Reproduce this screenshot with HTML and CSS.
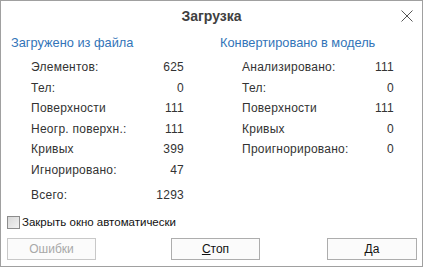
FILE: index.html
```html
<!DOCTYPE html>
<html lang="ru">
<head>
    <meta charset="UTF-8">
    <title>Загрузка</title>
    <link rel="stylesheet" href="styles.css">
</head>
<body>
    <div class="dialog">
        <div class="titlebar">
            <span class="title">Загрузка</span>
            <svg class="close" width="12" height="12" viewBox="0 0 12 12">
                <line x1="0.5" y1="0.5" x2="11.5" y2="11.5" />
                <line x1="11.5" y1="0.5" x2="0.5" y2="11.5" />
            </svg>
        </div>

        <div class="cols">
            <div class="col col-left">
                <div class="head">Загружено из файла</div>
                <div class="rows">
                    <div class="row"><span>Элементов:</span><span>625</span></div>
                    <div class="row"><span>Тел:</span><span>0</span></div>
                    <div class="row"><span>Поверхности</span><span>111</span></div>
                    <div class="row"><span>Неогр. поверхн.:</span><span>111</span></div>
                    <div class="row"><span>Кривых</span><span>399</span></div>
                    <div class="row"><span>Игнорировано:</span><span>47</span></div>
                    <div class="row total"><span>Всего:</span><span>1293</span></div>
                </div>
            </div>
            <div class="col col-right">
                <div class="head">Конвертировано в модель</div>
                <div class="rows">
                    <div class="row"><span>Анализировано:</span><span>111</span></div>
                    <div class="row"><span>Тел:</span><span>0</span></div>
                    <div class="row"><span>Поверхности</span><span>111</span></div>
                    <div class="row"><span>Кривых</span><span>0</span></div>
                    <div class="row"><span>Проигнорировано:</span><span>0</span></div>
                </div>
            </div>
        </div>

        <div class="footer">
            <label class="check"><span class="box"></span>Закрыть окно автоматически</label>
            <div class="buttons">
                <button class="btn btn-errors" disabled>Ошибки</button>
                <button class="btn btn-stop"><u>С</u>топ</button>
                <button class="btn btn-ok">Да</button>
            </div>
        </div>
    </div>
</body>
</html>
```

FILE: styles.css
```css
body { margin: 0; background: #fff; font-family: "Liberation Sans", Arial, sans-serif; font-size: 12px; color: #333; }

.dialog {
    width: 423px;
    height: 267px;
    box-sizing: border-box;
    border: 1px solid #a0a0a0;
    display: flex;
    flex-direction: column;
    position: relative;
}

.titlebar {
    height: 30px;
    line-height: 30px;
    text-align: center;
}
.title { font-size: 14px; font-weight: bold; color: #404040; }
.close {
    position: absolute;
    top: 9px;
    right: 9px;
    stroke: #555;
    stroke-width: 1;
}

.cols {
    display: grid;
    grid-template-columns: 219px 1fr;
    padding-top: 5px;
}
.col-left { padding-left: 10px; }
.head { color: #3274b8; font-size: 12.8px; line-height: 14px; }

.rows { margin-top: 7px; margin-left: 20px; width: 153px; letter-spacing: 0.25px; }
.col-right .rows { margin-left: 22px; width: 152px; }
.row {
    display: flex;
    justify-content: space-between;
    line-height: 20.5px;
}
.row.total { margin-top: 5px; }

.footer {
    margin-top: auto;
    padding: 0 5px 6px 6px;
}
.check {
    display: flex;
    align-items: center;
    height: 14px;
    font-size: 11.5px;
    color: #111;
    margin-bottom: 9px;
}
.box {
    width: 11px;
    height: 11px;
    border: 1px solid #8c8c8c;
    background: linear-gradient(135deg, #d8d8d8, #f2f2f2);
    margin-right: 2px;
}

.buttons { display: flex; }
.btn {
    width: 89px;
    height: 22px;
    border: 1px solid #adadad;
    background: #fbfbfb;
    font-family: inherit;
    font-size: 12px;
    color: #111;
    padding: 0;
}
.btn-errors { color: #a8a8a8; border-color: #c8c8c8; }
.btn-stop { margin-left: 75px; }
.btn-ok { margin-left: 67px; width: 90px; }
```
